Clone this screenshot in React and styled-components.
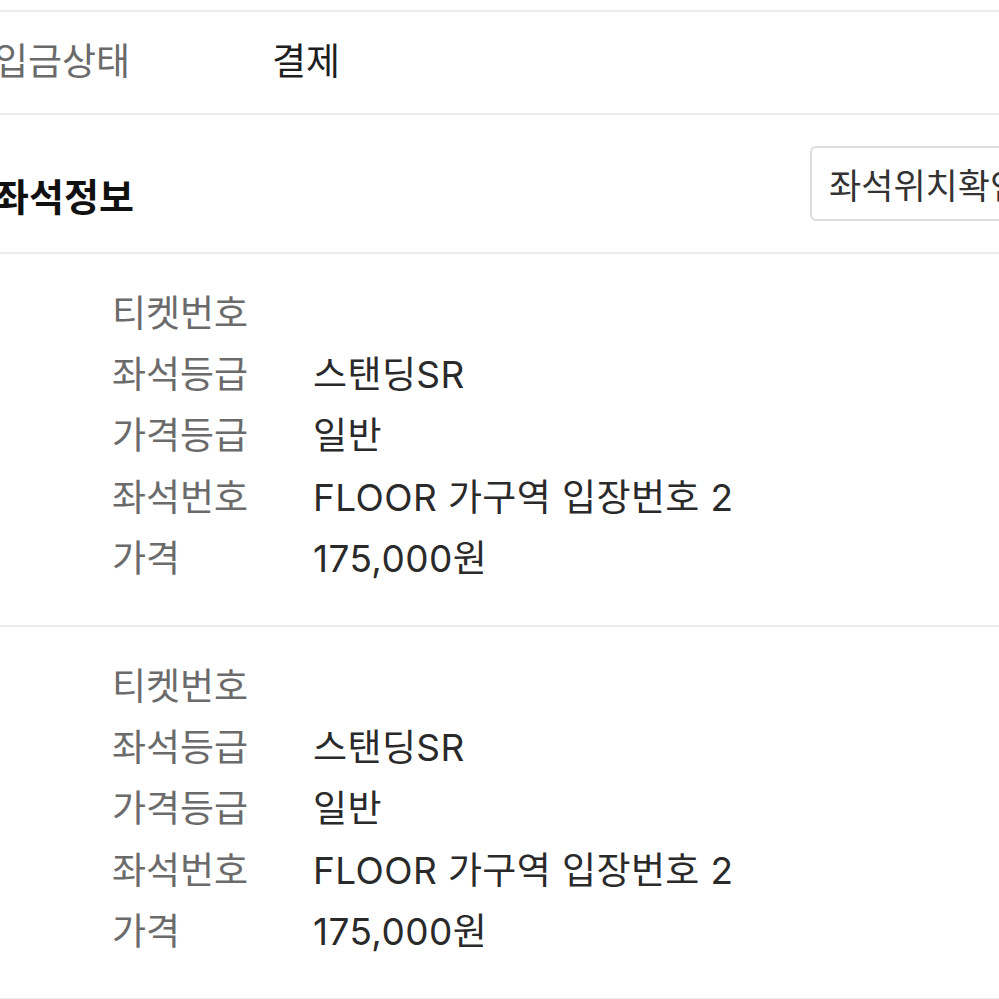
import React from "react";
import styled, { createGlobalStyle } from "styled-components";

const Global = createGlobalStyle`
  html, body { margin: 0; padding: 0; background: #f2f2f2; }
  body { overflow: hidden; font-family: Inter, "Noto Sans CJK KR", "Noto Sans", sans-serif; }
`;

const Page = styled.div`
  width: 1040px;
  margin-left: -6px;
  padding-top: 10px;
  background: #ffffff;
`;

const Divider = styled.div`
  height: 2px;
  background: #ececec;
`;

const InfoRow = styled.div`
  display: flex;
  align-items: center;
  height: 101px;
  padding-bottom: 8px;
  box-sizing: border-box;
`;

const InfoLabel = styled.span`
  width: 278px;
  font-size: 37px;
  color: #6a6a6a;
`;

const InfoValue = styled.span`
  font-size: 37px;
  color: #1e1e1e;
`;

const SectionHeader = styled.div`
  display: flex;
  align-items: center;
  justify-content: space-between;
  height: 137px;
`;

const SectionTitle = styled.h2`
  margin: 22px 0 0 0;
  font-size: 38px;
  font-weight: 700;
  color: #111;
`;

const OutlineButton = styled.button`
  height: 75px;
  width: 224px;
  padding: 0 0 0 17px;
  text-align: left;
  background: #fff;
  border: 2px solid #dedede;
  border-radius: 6px;
  font-family: inherit;
  font-size: 35px;
  color: #333;
  white-space: nowrap;
  overflow: hidden;
`;

const Ticket = styled.div`
  padding: 26px 0 38px 118px;
  display: grid;
  grid-template-columns: 201px 1fr;
  grid-auto-rows: 61.4px;
  align-items: center;
`;

const Label = styled.span`
  font-size: 37px;
  color: #6b6b6b;
`;

const Value = styled.span`
  font-size: 37px;
  letter-spacing: 0.4px;
  color: #2a2a2a;
`;

const Bottom = styled.div`
  height: 40px;
  background: #f2f2f2;
`;

const ticketRows = [
  ["티켓번호", ""],
  ["좌석등급", "스탠딩SR"],
  ["가격등급", "일반"],
  ["좌석번호", "FLOOR 가구역 입장번호 2"],
  ["가격", "175,000원"],
];

const tickets = [ticketRows, ticketRows];

export default function App() {
  return (
    <>
      <Global />
      <Page>
        <Divider />
        <InfoRow>
          <InfoLabel>입금상태</InfoLabel>
          <InfoValue>결제</InfoValue>
        </InfoRow>
        <Divider />
        <SectionHeader>
          <SectionTitle>좌석정보</SectionTitle>
          <OutlineButton>좌석위치확인</OutlineButton>
        </SectionHeader>
        <Divider />
        {tickets.map((rows, i) => (
          <React.Fragment key={i}>
            <Ticket>
              {rows.map(([l, v]) => (
                <React.Fragment key={l}>
                  <Label>{l}</Label>
                  <Value>{v}</Value>
                </React.Fragment>
              ))}
            </Ticket>
            <Divider />
          </React.Fragment>
        ))}
        <Bottom />
      </Page>
    </>
  );
}
